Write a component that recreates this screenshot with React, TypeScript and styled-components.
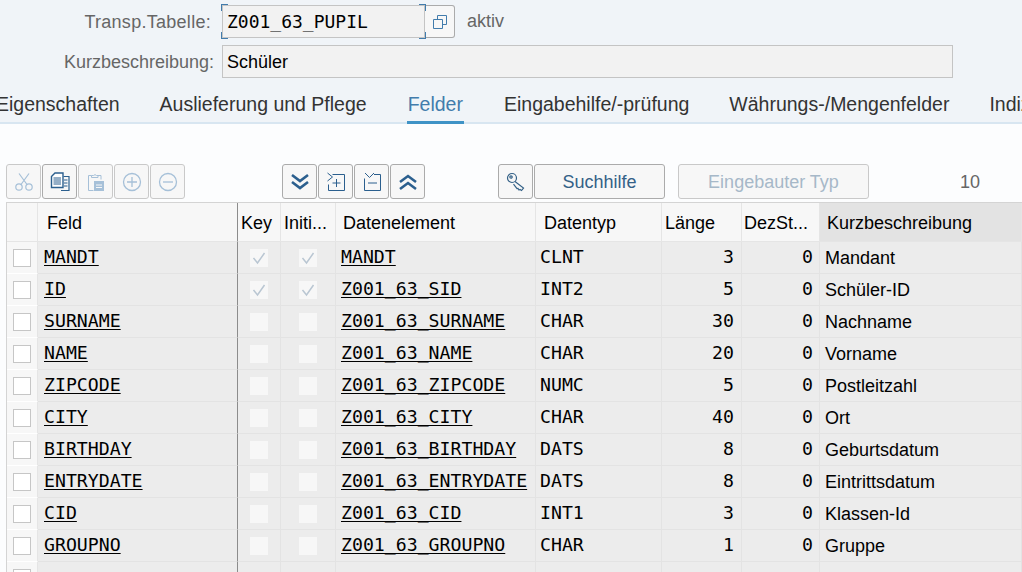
import React from 'react';
import styled, { createGlobalStyle } from 'styled-components';

const GlobalStyle = createGlobalStyle`
  html, body {
    margin: 0;
    padding: 0;
    background: #fcfdfe;
  }
  body {
    width: 1022px;
    height: 572px;
    overflow: hidden;
    font-family: "Liberation Sans", Arial, sans-serif;
  }
`;

const MONO = '"DejaVu Sans Mono", "Liberation Mono", monospace';
const COLUMNS = '31px 200px 43px 55px 200px 126px 80px 78px 202px';

const Page = styled.div`
  width: 1022px;
  height: 572px;
  overflow: hidden;
`;

const Head = styled.div`
  height: 122px;
  background: #f0f4f8;
  border-bottom: 2px solid #d8e6f1;
  box-sizing: content-box;
  display: flex;
  flex-direction: column;
`;

const FormRow = styled.div`
  display: flex;
  align-items: center;
`;

const TitleRow = styled(FormRow)`
  margin-top: 5px;
`;

const DescRow = styled(FormRow)`
  margin-top: 7px;
`;

const Label = styled.label<{ $inset?: number; $spread?: number }>`
  width: 214px;
  box-sizing: border-box;
  padding: 2px ${({ $inset }) => $inset ?? 0}px 0 0;
  letter-spacing: ${({ $spread }) => $spread ?? 0}px;
  text-align: right;
  font-size: 18px;
  color: #666666;
  margin-right: 8px;
  flex: none;
  white-space: nowrap;
`;

const Input = styled.div<{ $mono?: boolean; $width: number }>`
  box-sizing: border-box;
  width: ${({ $width }) => $width}px;
  height: 33px;
  line-height: ${({ $mono }) => ($mono ? 31 : 33)}px;
  padding-left: 4px;
  background: #f2f2f2;
  border: 1px solid #c4c4c4;
  color: #000;
  font-family: ${({ $mono }) => ($mono ? MONO : 'inherit')};
  font-size: 18px;
  position: relative;
`;

const Corner = styled.span<{ $v: 'top' | 'bottom'; $h: 'left' | 'right' }>`
  position: absolute;
  width: 6px;
  height: 6px;
  ${({ $v }) => $v}: -2px;
  ${({ $h }) => $h}: -2px;
  border-${({ $v }) => $v}: 1px solid #427cac;
  border-${({ $h }) => $h}: 1px solid #427cac;
`;

const ValueHelp = styled.button`
  box-sizing: border-box;
  width: 30px;
  height: 33px;
  margin-left: 0;
  padding: 0;
  background: #f7f7f7;
  border: 1px solid #ababab;
  border-left: none;
  border-radius: 0 3px 3px 0;
  display: flex;
  align-items: center;
  justify-content: center;
`;

const Status = styled.span`
  margin-left: 12px;
  font-size: 18px;
  color: #666666;
`;

const Tabs = styled.div`
  display: flex;
  gap: 40px;
  margin-top: auto;
  margin-left: -4px;
  white-space: nowrap;
`;

const Tab = styled.div<{ $active?: boolean }>`
  height: 35px;
  line-height: 31px;
  font-size: 19.5px;
  flex: none;
  box-sizing: border-box;
  padding: 0 ${({ $active }) => ($active ? 1 : 0)}px;
  color: ${({ $active }) => ($active ? '#427cac' : '#333333')};
  border-bottom: 3px solid ${({ $active }) => ($active ? '#3f93c6' : 'transparent')};
  margin-bottom: -2px;
`;

const Toolbar = styled.div`
  height: 35px;
  margin-top: 40px;
  padding-left: 6px;
  display: flex;
  align-items: stretch;
  font-size: 18px;
`;

const ToolButton = styled.button<{ $on?: boolean; $w?: number; $ml?: number }>`
  box-sizing: border-box;
  width: ${({ $w }) => $w ?? 35}px;
  margin: 0 0 0 ${({ $ml }) => $ml ?? 1}px;
  padding: ${({ $w }) => ($w ? 2 : 0)}px 0 0;
  background: #f7f7f7;
  border: 1px solid ${({ $on }) => ($on ? '#ababab' : '#c9c9c9')};
  border-radius: 3px;
  display: flex;
  align-items: center;
  justify-content: center;
  font-family: inherit;
  font-size: 18px;
  color: ${({ $on }) => ($on ? '#346187' : '#a6b8c8')};

  &:first-child {
    margin-left: 0;
  }
`;

const Counter = styled.span`
  width: 20px;
  margin-left: 91px;
  line-height: 36px;
  color: #666666;
`;

const Table = styled.div`
  margin: 3px 0 0 6px;
  border-top: 1px solid #d4d4d4;
  border-left: 1px solid #d4d4d4;
`;

const TableHeader = styled.div`
  display: grid;
  grid-template-columns: ${COLUMNS};
  height: 39px;
`;

const HeaderCell = styled.div<{ $sorted?: boolean; $pad?: number; $divider?: boolean }>`
  box-sizing: border-box;
  background: ${({ $sorted }) => ($sorted ? '#e3e3e3' : '#f7f7f7')};
  border-right: 1px solid ${({ $divider }) => ($divider ? '#8c8c8c' : '#e5e5e5')};
  border-bottom: 1px solid #e5e5e5;
  padding-left: ${({ $pad }) => $pad ?? 8}px;
  line-height: 40px;
  font-size: 18px;
  color: #000;
  white-space: nowrap;
  overflow: hidden;
`;

const Row = styled.div`
  display: grid;
  grid-template-columns: ${COLUMNS};
  height: 32px;
`;

const SelectorCell = styled.div`
  background: #f7f7f7;
  border-right: 1px solid #e5e5e5;
  border-bottom: 1px solid #ffffff;
  display: flex;
  align-items: center;
  padding-left: 6px;
  box-sizing: border-box;
`;

const SelectorBox = styled.span`
  display: block;
  box-sizing: border-box;
  width: 18px;
  height: 18px;
  background: #fff;
  border: 1px solid #c6c6c6;
`;

const Cell = styled.div<{ $right?: number; $divider?: boolean; $center?: boolean; $pad?: number }>`
  box-sizing: border-box;
  background: #ececec;
  border-right: 1px solid ${({ $divider }) => ($divider ? '#8c8c8c' : '#e3e3e3')};
  border-bottom: 1px solid #e3e3e3;
  padding: 0 ${({ $right }) => $right ?? 0}px 0 ${({ $pad }) => $pad ?? 5}px;
  display: flex;
  align-items: center;
  justify-content: ${({ $right, $center }) => ($right ? 'flex-end' : $center ? 'center' : 'flex-start')};
  font-size: 18px;
  color: #000;
  white-space: nowrap;
  overflow: hidden;
`;

const MonoText = styled.span<{ $link?: boolean }>`
  font-family: ${MONO};
  font-size: 18.2px;
  margin-bottom: 2px;
  text-decoration: ${({ $link }) => ($link ? 'underline' : 'none')};
  text-decoration-skip-ink: none;
  text-decoration-thickness: 1px;
  text-underline-offset: 2px;
`;

const Description = styled.span`
  margin-top: 2px;
`;

const Check = styled.span`
  box-sizing: border-box;
  width: 18px;
  height: 18px;
  background: #f7f7f7;
  display: flex;
  align-items: center;
  justify-content: center;
`;

const Svg = styled.svg`
  display: block;
  fill: none;
`;

type IconProps = { c?: string };

const CopyIcon = ({ c = '#427cac' }: IconProps) => (
  <Svg width="16" height="16" viewBox="0 0 16 16" stroke={c}>
    <path d="M1.500 5.500h9v9h-9zM5.500 5V1.500h9v9H11" />
  </Svg>
);

const ScissorsIcon = ({ c = '#a6c0d8' }: IconProps) => (
  <Svg width="20" height="20" viewBox="0 0 20 20" stroke={c} strokeWidth="1.200">
    <circle cx="5" cy="15" r="3.200" />
    <circle cx="15" cy="15" r="3.200" />
    <path d="M7 12.500 15 1.500M13 12.500 5 1.500" />
  </Svg>
);

const DocsIcon = ({ c = '#2b5f8e' }: IconProps) => (
  <Svg width="20" height="20" viewBox="0 0 20 20" stroke={c}>
    <path d="M13.500 4.500h5.500v14h-8" strokeWidth="1.200" />
    <path d="M1.500 4.500 5 1h8v14.500H1.500z" fill="#fff" strokeWidth="1.400" />
    <path d="M3.500 6h7.500M3.500 8h7.500M3.500 10h7.500M3.500 12h7.500M14 8h3.500M14 11h3.500M14 14h3.500" />
  </Svg>
);

const PasteIcon = ({ c = '#a6c0d8' }: IconProps) => (
  <Svg width="20" height="20" viewBox="0 0 20 20" stroke={c}>
    <path d="M5.500 3.500h-3v15h5M12 3.500h3v4" />
    <path d="M5.500 5.500v-2h2a2 2 0 0 1 3 0h1.500v2z" />
    <rect x="8" y="9" width="10" height="10" fill={c} stroke="none" />
    <path d="M10 13h6M10 15.500h6" stroke="#f7f7f7" />
  </Svg>
);

const PlusIcon = ({ c = '#a6c0d8' }: IconProps) => (
  <Svg width="20" height="20" viewBox="0 0 20 20" stroke={c} strokeWidth="1.300">
    <circle cx="10" cy="10" r="8.500" />
    <path d="M10 5v10M5 10h10" />
  </Svg>
);

const MinusIcon = ({ c = '#a6c0d8' }: IconProps) => (
  <Svg width="20" height="20" viewBox="0 0 20 20" stroke={c} strokeWidth="1.300">
    <circle cx="10" cy="10" r="8.500" />
    <path d="M5 10h10" />
  </Svg>
);

const ChevronsDownIcon = ({ c = '#2b5f8e' }: IconProps) => (
  <Svg width="20" height="20" viewBox="0 0 20 20" stroke={c} strokeWidth="2.600">
    <path d="M2 3l8 6 8-6M2 10l8 6 8-6" />
  </Svg>
);

const ChevronsUpIcon = ({ c = '#2b5f8e' }: IconProps) => (
  <Svg width="20" height="20" viewBox="0 0 20 20" stroke={c} strokeWidth="2.600">
    <path d="M2 10l8-6 8 6M2 17l8-6 8 6" />
  </Svg>
);

const InsertIcon = ({ c = '#2b5f8e' }: IconProps) => (
  <Svg width="20" height="20" viewBox="0 0 20 20" stroke={c}>
    <path d="M1.500 1l5 4-5 4M6.500 2.500h12v16h-16v-6" />
    <path d="M10.500 7v8M6.500 11h8" />
  </Svg>
);

const DeleteRowIcon = ({ c = '#2b5f8e' }: IconProps) => (
  <Svg width="20" height="20" viewBox="0 0 20 20" stroke={c}>
    <path d="M3 1l4.500 4.500L12 1M12 2.500h6.500v16h-16v-12" />
    <path d="M6 11h9" />
  </Svg>
);

const KeyIcon = ({ c = '#346187' }: IconProps) => (
  <Svg width="20" height="20" viewBox="0 0 20 20" stroke={c} strokeWidth="1.200">
    <circle cx="6" cy="6" r="4.500" />
    <circle cx="5" cy="5" r="1.200" />
    <path d="M9 9.500l8.500 6.500-2 2.500-1.500-1-1 .5-1-1.500-1 .2-3.500-4.500" />
  </Svg>
);

const CheckIcon = () => (
  <Svg width="14" height="14" viewBox="0 0 14 14" stroke="#b9c6d2" strokeWidth="1.500">
    <path d="M1.500 7l4 5L12.500 2" />
  </Svg>
);

const TABS = [
  'Eigenschaften',
  'Auslieferung und Pflege',
  'Felder',
  'Eingabehilfe/-prüfung',
  'Währungs-/Mengenfelder',
  'Indizes',
];

const FIELDS = [
  { field: 'MANDT', key: true, element: 'MANDT', type: 'CLNT', length: 3, text: 'Mandant' },
  { field: 'ID', key: true, element: 'Z001_63_SID', type: 'INT2', length: 5, text: 'Schüler-ID' },
  { field: 'SURNAME', element: 'Z001_63_SURNAME', type: 'CHAR', length: 30, text: 'Nachname' },
  { field: 'NAME', element: 'Z001_63_NAME', type: 'CHAR', length: 20, text: 'Vorname' },
  { field: 'ZIPCODE', element: 'Z001_63_ZIPCODE', type: 'NUMC', length: 5, text: 'Postleitzahl' },
  { field: 'CITY', element: 'Z001_63_CITY', type: 'CHAR', length: 40, text: 'Ort' },
  { field: 'BIRTHDAY', element: 'Z001_63_BIRTHDAY', type: 'DATS', length: 8, text: 'Geburtsdatum' },
  { field: 'ENTRYDATE', element: 'Z001_63_ENTRYDATE', type: 'DATS', length: 8, text: 'Eintrittsdatum' },
  { field: 'CID', element: 'Z001_63_CID', type: 'INT1', length: 3, text: 'Klassen-Id' },
  { field: 'GROUPNO', element: 'Z001_63_GROUPNO', type: 'CHAR', length: 1, text: 'Gruppe' },
];

const App: React.FC = () => (
  <Page>
    <GlobalStyle />
    <Head>
      <TitleRow>
        <Label $inset={3} $spread={0.28}>Transp.Tabelle:</Label>
        <Input $mono $width={203}>
          Z001_63_PUPIL
          <Corner $v="top" $h="left" />
          <Corner $v="top" $h="right" />
          <Corner $v="bottom" $h="left" />
          <Corner $v="bottom" $h="right" />
        </Input>
        <ValueHelp>
          <CopyIcon />
        </ValueHelp>
        <Status>aktiv</Status>
      </TitleRow>
      <DescRow>
        <Label>Kurzbeschreibung:</Label>
        <Input $width={731}>Schüler</Input>
      </DescRow>
      <Tabs>
        {TABS.map(tab => (
          <Tab key={tab} $active={tab === 'Felder'}>
            {tab}
          </Tab>
        ))}
      </Tabs>
    </Head>
    <Toolbar>
      <ToolButton><ScissorsIcon /></ToolButton>
      <ToolButton $on><DocsIcon /></ToolButton>
      <ToolButton><PasteIcon /></ToolButton>
      <ToolButton><PlusIcon /></ToolButton>
      <ToolButton><MinusIcon /></ToolButton>
      <ToolButton $on $ml={97}><ChevronsDownIcon /></ToolButton>
      <ToolButton $on><InsertIcon /></ToolButton>
      <ToolButton $on><DeleteRowIcon /></ToolButton>
      <ToolButton $on><ChevronsUpIcon /></ToolButton>
      <ToolButton $on $ml={73}><KeyIcon /></ToolButton>
      <ToolButton $on $w={131}>Suchhilfe</ToolButton>
      <ToolButton $w={191} $ml={13}>Eingebauter Typ</ToolButton>
      <Counter>10</Counter>
    </Toolbar>
    <Table>
      <TableHeader>
        <HeaderCell />
        <HeaderCell $divider $pad={9}>Feld</HeaderCell>
        <HeaderCell $pad={3}>Key</HeaderCell>
        <HeaderCell $pad={3}>Initi...</HeaderCell>
        <HeaderCell $pad={7}>Datenelement</HeaderCell>
        <HeaderCell>Datentyp</HeaderCell>
        <HeaderCell $pad={3}>Länge</HeaderCell>
        <HeaderCell $pad={2}>DezSt...</HeaderCell>
        <HeaderCell $sorted $pad={7}>Kurzbeschreibung</HeaderCell>
      </TableHeader>
      {FIELDS.map(row => (
        <Row key={row.field}>
          <SelectorCell><SelectorBox /></SelectorCell>
          <Cell $divider $pad={6}><MonoText $link>{row.field}</MonoText></Cell>
          <Cell $center $pad={0}><Check>{row.key && <CheckIcon />}</Check></Cell>
          <Cell $center $pad={0}><Check>{row.key && <CheckIcon />}</Check></Cell>
          <Cell><MonoText $link>{row.element}</MonoText></Cell>
          <Cell $pad={4}><MonoText>{row.type}</MonoText></Cell>
          <Cell $right={7}><MonoText>{row.length}</MonoText></Cell>
          <Cell $right={6}><MonoText>0</MonoText></Cell>
          <Cell><Description>{row.text}</Description></Cell>
        </Row>
      ))}
      <Row>
        <SelectorCell><SelectorBox /></SelectorCell>
        <Cell $divider />
        <Cell />
        <Cell />
        <Cell />
        <Cell />
        <Cell />
        <Cell />
        <Cell />
      </Row>
    </Table>
  </Page>
);

export default App;
